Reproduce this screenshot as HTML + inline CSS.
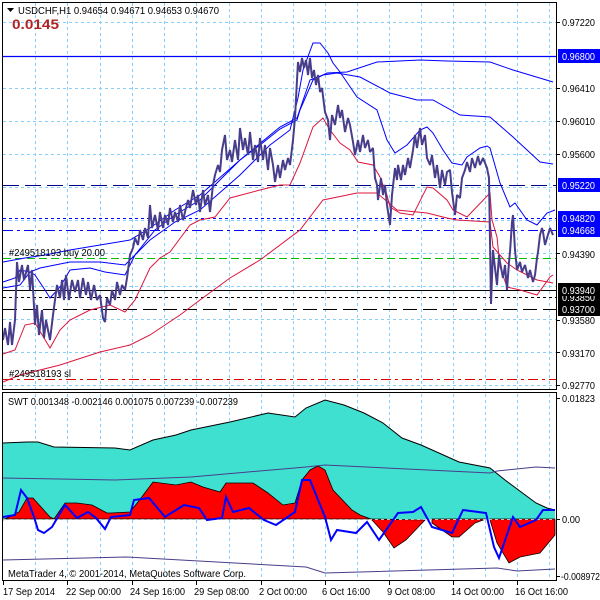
<!DOCTYPE html>
<html><head><meta charset="utf-8"><style>
html,body{margin:0;padding:0;background:#fff;}
svg{display:block;font-family:"Liberation Sans",sans-serif;}
</style></head><body>
<svg width="600" height="600" viewBox="0 0 600 600" xmlns="http://www.w3.org/2000/svg">
<rect width="600" height="600" fill="#fff"/>
<g stroke="#87cefa" stroke-width="1" stroke-dasharray="3,3">
<path d="M35.5 3V389M67.5 3V389M100.5 3V389M132.5 3V389M164.5 3V389M196.5 3V389M229.5 3V389M261.5 3V389M293.5 3V389M325.5 3V389M357.5 3V389M389.5 3V389M421.5 3V389M453.5 3V389M485.5 3V389M517.5 3V389M549.5 3V389"/>
<path d="M3 22.5H556M3 88.5H556M3 121.5H556M3 154.5H556M3 187.5H556M3 220.5H556M3 253.5H556M3 286.5H556M3 319.5H556M3 352.5H556M3 385.5H556"/>
<path d="M35.5 394V580M67.5 394V580M100.5 394V580M132.5 394V580M164.5 394V580M196.5 394V580M229.5 394V580M261.5 394V580M293.5 394V580M325.5 394V580M357.5 394V580M389.5 394V580M421.5 394V580M453.5 394V580M485.5 394V580M517.5 394V580M549.5 394V580"/>
</g>
<path d="M3 56.5H556" stroke="#0000ff" stroke-width="1.3"/>
<path d="M3 185.5H556" stroke="#00008b" stroke-dasharray="16,6"/>
<path d="M3 218.5H556" stroke="#0000ff" stroke-dasharray="3,3"/>
<path d="M3 230.5H556" stroke="#0000ff" stroke-dasharray="10,4,3,4"/>
<path d="M3 258.5H556" stroke="#00c000" stroke-dasharray="8,4"/>
<path d="M3 290.5H556" stroke="#000"/>
<path d="M3 297.5H556" stroke="#000" stroke-dasharray="3,3"/>
<path d="M3 309.5H556" stroke="#000" stroke-dasharray="14,6"/>
<path d="M3 379.5H556" stroke="#dc0000" stroke-dasharray="10,4,3,4"/>
<g fill="none" stroke="#dc143c" stroke-width="1">
<polyline points="3,382 20,375 60,365 100,352 130,345 150,335 180,315 200,300 230,278 260,260 300,230 323,200 357,193 377,193 397,210 427,213 447,218 457,220 490,222 493,247 507,263 517,270 537,280 553,283"/>
<polyline points="3,354 15,350 25,325 35,323 50,348 60,330 70,320 90,310 110,305 125,312 135,300 150,268 160,258 170,252 190,225 200,220 215,217 230,198 260,190 280,185 290,185 300,163 313,127 323,118 330,130 340,143 350,150 358,162 373,165 380,177 387,195 390,207 400,213 413,215 427,187 433,188 447,200 453,210 467,217 490,193 492,220 497,237 500,267 507,287 520,290 537,295 550,277 553,275"/>
</g>
<g fill="none" stroke="#0000ff" stroke-width="1">
<polyline points="3,262 25,258 45,255 70,250 100,245 130,240 150,228 175,210 200,195 240,160 260,145 280,129 297,120 300,110 313,80 327,73 347,72 377,62 420,60 447,61 490,62 513,70 553,82"/>
<polyline points="3,282 15,278 20,270 30,272 35,275 45,290 50,298 60,287 70,270 90,268 105,272 125,275 135,255 155,230 175,215 200,200 240,160 280,127 297,118 310,80 323,75 337,73 360,77 390,93 417,100 433,100 460,115 490,117 513,137 540,162 553,164"/>
<polyline points="3,288 20,285 30,272 40,268 55,265 70,262 100,262 125,265 150,240 175,222 200,210 240,175 270,145 290,130 298,98 303,70 313,43 320,43 328,53 333,63 340,72 357,97 377,110 387,140 395,153 407,145 420,130 427,127 433,133 443,150 452,163 462,165 467,157 480,148 487,146 490,148 500,183 510,207 515,203 527,220 537,225 547,213 555,210"/>
</g>
<polyline fill="none" stroke="#483d8b" stroke-width="2" stroke-linejoin="bevel" points="3,340 5,328 8,345 10,322 12,345 15,320 17,262 19,282 22,265 24,280 28,265 30,290 32,270 35,325 37,305 39,335 42,310 44,338 46,320 48,330 50,340 53,315 55,300 57,285 60,298 62,280 64,300 66,275 69,300 72,280 75,292 78,280 80,298 83,278 86,295 88,282 91,300 94,285 97,300 100,295 103,318 105,322 107,298 110,305 112,290 115,300 117,282 120,295 122,285 125,290 127,278 130,255 133,248 135,238 138,245 140,230 143,240 145,228 148,238 150,205 152,228 155,215 158,230 160,212 163,228 165,215 168,225 170,208 173,222 175,212 178,222 180,205 183,220 185,212 188,200 190,208 193,190 196,205 198,195 200,212 203,190 205,205 208,195 210,212 213,185 215,175 218,165 220,172 222,150 225,135 227,160 230,150 232,162 235,140 238,160 240,128 243,150 245,138 248,155 250,132 253,160 255,145 258,162 260,138 263,160 265,145 268,170 270,148 273,165 275,182 278,165 280,178 283,160 285,170 288,158 290,165 293,140 295,118 297,80 298,62 300,72 302,58 304,68 306,60 308,75 310,58 312,78 314,70 316,85 318,75 320,92 322,88 325,112 328,120 330,140 332,115 335,125 338,105 340,118 342,110 345,132 348,118 350,125 353,142 355,155 358,140 360,152 363,135 365,148 368,140 370,152 373,148 375,178 377,185 378,200 381,178 383,195 385,185 387,205 390,225 392,195 395,168 397,180 398,165 401,180 403,165 405,175 408,158 410,168 413,150 415,135 417,148 420,128 422,145 425,135 427,158 430,165 432,155 435,178 437,165 440,188 442,170 445,185 447,172 450,170 452,192 455,215 457,195 460,198 462,178 465,170 467,162 470,172 472,158 475,168 478,156 480,165 483,158 487,168 489,178 491,304 493,250 495,268 497,285 499,255 500,262 503,278 505,265 507,290 509,262 510,252 512,222 513,215 515,250 517,270 520,262 522,272 525,265 528,278 530,270 533,282 535,275 537,258 538,252 540,235 542,228 543,232 545,245 547,238 550,228 553,235"/>
<rect x="2.5" y="2.5" width="554" height="387" fill="none" stroke="#000"/>
<path d="M7 8h7l-3.5 4z" fill="#000"/>
<text x="18" y="14" font-size="10" fill="#000" textLength="201" lengthAdjust="spacingAndGlyphs">USDCHF,H1  0.94654 0.94671 0.94653 0.94670</text>
<text x="12" y="29" font-size="14" font-weight="bold" fill="#b22222" textLength="47" lengthAdjust="spacingAndGlyphs">0.0145</text>
<text x="9" y="256" font-size="10" fill="#000" textLength="96" lengthAdjust="spacingAndGlyphs">#249518193 buy 20.00</text>
<text x="9" y="377" font-size="10" fill="#000" textLength="62" lengthAdjust="spacingAndGlyphs">#249518193 sl</text>
<g font-size="10" fill="#000">
<text x="562" y="26" textLength="33" lengthAdjust="spacingAndGlyphs">0.97220</text>
<text x="562" y="92" textLength="33" lengthAdjust="spacingAndGlyphs">0.96410</text>
<text x="562" y="125" textLength="33" lengthAdjust="spacingAndGlyphs">0.96010</text>
<text x="562" y="158" textLength="33" lengthAdjust="spacingAndGlyphs">0.95600</text>
<text x="562" y="258" textLength="33" lengthAdjust="spacingAndGlyphs">0.94390</text>
<text x="562" y="324" textLength="33" lengthAdjust="spacingAndGlyphs">0.93580</text>
<text x="562" y="357" textLength="33" lengthAdjust="spacingAndGlyphs">0.93170</text>
<text x="562" y="389" textLength="33" lengthAdjust="spacingAndGlyphs">0.92770</text>
</g>
<g stroke="#000"><path d="M556 22.5h4M556 88.5h4M556 121.5h4M556 154.5h4M556 253.5h4M556 320.5h4M556 352.5h4M556 385.5h4"/></g>
<g font-size="10">
<rect x="558" y="49" width="42" height="14" fill="#0000ff"/><text x="562" y="60" fill="#fff" textLength="33" lengthAdjust="spacingAndGlyphs">0.96800</text>
<rect x="558" y="178" width="42" height="14" fill="#0000ff"/><text x="562" y="189" fill="#fff" textLength="33" lengthAdjust="spacingAndGlyphs">0.95220</text>
<rect x="558" y="211" width="42" height="14" fill="#0000ff"/><text x="562" y="222" fill="#fff" textLength="33" lengthAdjust="spacingAndGlyphs">0.94820</text>
<rect x="558" y="223" width="42" height="14" fill="#0000ff"/><text x="562" y="234" fill="#fff" textLength="33" lengthAdjust="spacingAndGlyphs">0.94668</text>
<rect x="558" y="290" width="42" height="14" fill="#000"/><text x="562" y="301" fill="#fff" textLength="33" lengthAdjust="spacingAndGlyphs">0.93850</text>
<rect x="558" y="283" width="42" height="13" fill="#000"/><text x="562" y="294" fill="#fff" textLength="33" lengthAdjust="spacingAndGlyphs">0.93940</text>
<rect x="558" y="302" width="42" height="14" fill="#000"/><text x="562" y="313" fill="#fff" textLength="33" lengthAdjust="spacingAndGlyphs">0.93700</text>
</g>
<polygon fill="#40e0d0" points="3,519 3,443 27,442 38,442 54,447 115,448 130,450 153,440 176,435 191,430 230,422 268,413 295,417 306,408 325,400 344,405 364,413 383,423 402,438 421,445 459,462 490,468 505,480 536,503 547,508 555,510 555,519"/>
<polyline fill="none" stroke="#000" points="3,443 27,442 38,442 54,447 115,448 130,450 153,440 176,435 191,430 230,422 268,413 295,417 306,408 325,400 344,405 364,413 383,423 402,438 421,445 459,462 490,468 505,480 536,503 547,508 555,510"/>
<polygon fill="#ff0000" stroke="#000" stroke-width="0.8" points="3,520 19,512 27,498 33,498 50,517 54,519 65,503 77,503 92,505 107,513 111,513 130,512 138,502 153,482 176,485 191,482 203,487 220,492 226,483 253,483 268,493 283,505 295,503 302,480 310,470 318,466 325,470 333,490 352,510 360,515 371,519 3,519"/>
<polygon fill="#ff0000" stroke="#000" stroke-width="0.8" points="371,519 383,532 394,548 406,540 425,520"/>
<polygon fill="#ff0000" stroke="#000" stroke-width="0.8" points="432,519 432,523 452,537 459,537 475,523 486,519"/>
<polygon fill="#ff0000" stroke="#000" stroke-width="0.8" points="490,519 490,520 497,543 509,563 520,557 540,553 555,535 555,519"/>
<path d="M3 519.5H556" stroke="#c0c0c0" stroke-dasharray="3,3"/>
<polyline fill="none" stroke="#483d8b" points="3,478 115,480 191,477 306,467 325,465 490,473 497,471 536,467 555,468"/>
<polyline fill="none" stroke="#483d8b" points="3,560 126,557 306,567 325,573 497,568 517,571 555,569"/>
<polyline fill="none" stroke="#0000ff" stroke-width="2" points="3,517 15,515 21,490 27,498 34,517 38,530 44,533 52,527 65,505 77,518 88,512 96,518 105,529 111,517 130,515 134,500 149,498 165,517 184,505 199,508 207,520 222,518 226,497 233,512 249,508 264,520 276,525 295,512 302,480 310,480 325,517 331,540 337,530 356,533 367,522 379,540 398,513 413,512 421,507 432,527 452,533 463,510 486,513 494,547 499,558 513,517 520,527 536,520 543,510 555,510"/>
<rect x="2.5" y="392.5" width="554" height="188" fill="none" stroke="#000"/>
<text x="8" y="405" font-size="10" fill="#000" textLength="230" lengthAdjust="spacingAndGlyphs">SWT 0.001348 -0.002146 0.001075 0.007239 -0.007239</text>
<text x="8" y="577" font-size="10" fill="#000" textLength="238" lengthAdjust="spacingAndGlyphs">MetaTrader 4, © 2001-2014, MetaQuotes Software Corp.</text>
<g font-size="10" fill="#000">
<text x="562" y="402" textLength="33" lengthAdjust="spacingAndGlyphs">0.01823</text>
<text x="562" y="523" textLength="18" lengthAdjust="spacingAndGlyphs">0.00</text>
<text x="561" y="580" textLength="39" lengthAdjust="spacingAndGlyphs">-0.008972</text>
</g>
<path d="M556 398.5h4M556 519.5h4M556 576.5h4" stroke="#000"/>
<path d="M3.5 581v4M67.5 581v4M132.5 581v4M196.5 581v4M261.5 581v4M325.5 581v4M389.5 581v4M453.5 581v4M517.5 581v4" stroke="#000"/>
<g font-size="10" fill="#000">
<text x="3" y="595" textLength="52" lengthAdjust="spacingAndGlyphs">17 Sep 2014</text>
<text x="66" y="595" textLength="55" lengthAdjust="spacingAndGlyphs">22 Sep 00:00</text>
<text x="130" y="595" textLength="55" lengthAdjust="spacingAndGlyphs">24 Sep 16:00</text>
<text x="194" y="595" textLength="55" lengthAdjust="spacingAndGlyphs">29 Sep 08:00</text>
<text x="259" y="595" textLength="48" lengthAdjust="spacingAndGlyphs">2 Oct 00:00</text>
<text x="322" y="595" textLength="48" lengthAdjust="spacingAndGlyphs">6 Oct 16:00</text>
<text x="387" y="595" textLength="48" lengthAdjust="spacingAndGlyphs">9 Oct 08:00</text>
<text x="451" y="595" textLength="53" lengthAdjust="spacingAndGlyphs">14 Oct 00:00</text>
<text x="515" y="595" textLength="53" lengthAdjust="spacingAndGlyphs">16 Oct 16:00</text>
</g>
</svg>
</body></html>
